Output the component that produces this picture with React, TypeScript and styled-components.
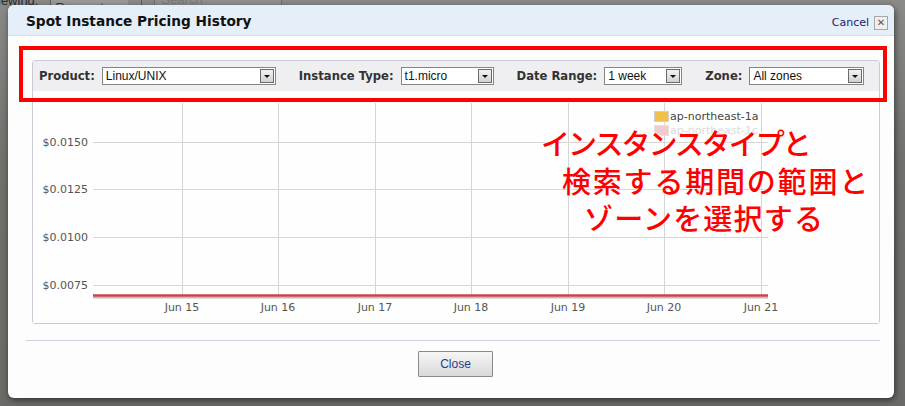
import React from "react";
import styled, {createGlobalStyle} from "styled-components";

type SelectProps = {
    w: number
}
type LineProps = {
    indent: number
    spacing: number
}

const GlobalStyle = createGlobalStyle`
  html, body {
    margin: 0;
    padding: 0;
    background: #777874;
  }
  body {
    font-family: "DejaVu Sans", Verdana, sans-serif;
  }
`

const filters = [
    {label: "Product:", value: "Linux/UNIX", width: 174},
    {label: "Instance Type:", value: "t1.micro", width: 93},
    {label: "Date Range:", value: "1 week", width: 78},
    {label: "Zone:", value: "All zones", width: 115},
]

const priceTicks = [
    {label: "$0.0150", y: 51},
    {label: "$0.0125", y: 98},
    {label: "$0.0100", y: 146},
    {label: "$0.0075", y: 194},
]

const dayTicks = [
    {label: "Jun 15", x: 149},
    {label: "Jun 16", x: 245},
    {label: "Jun 17", x: 342},
    {label: "Jun 18", x: 438},
    {label: "Jun 19", x: 535},
    {label: "Jun 20", x: 631},
    {label: "Jun 21", x: 728},
]

const PriceChart = () => (
    <svg width="846" height="231" viewBox="0 0 846 231">
        {priceTicks.map(t => (
            <g key={t.label}>
                <line x1="60" x2="735" y1={t.y + 0.5} y2={t.y + 0.5} stroke="#d6d6d6" strokeWidth="1"/>
                <text x="55" y={t.y + 4} textAnchor="end" fontSize="11" fill="#555"
                      fontFamily="DejaVu Sans, Verdana, sans-serif">{t.label}</text>
            </g>
        ))}
        {dayTicks.map(t => (
            <g key={t.label}>
                <line x1={t.x + 0.5} x2={t.x + 0.5} y1="12" y2="204" stroke="#d6d6d6" strokeWidth="1"/>
                <text x={t.x} y="220" textAnchor="middle" fontSize="11" fill="#555"
                      fontFamily="DejaVu Sans, Verdana, sans-serif">{t.label}</text>
            </g>
        ))}
        <line x1="60" x2="735" y1="206.5" y2="206.5" stroke="#bdbdbd" strokeWidth="2"/>
        <line x1="60" x2="735" y1="204.5" y2="204.5" stroke="#c9444c" strokeWidth="2.5"/>
        <rect x="621.5" y="20.5" width="14" height="10" fill="#efc04a" stroke="#d0d0d0"/>
        <text x="637" y="29" fontSize="11" fill="#444" fontFamily="DejaVu Sans, Verdana, sans-serif">ap-northeast-1a</text>
        <rect x="621.5" y="34.5" width="14" height="10" fill="#f2cccc" stroke="#e2e2e2"/>
        <text x="637" y="43" fontSize="11" fill="#dcdcdc" fontFamily="DejaVu Sans, Verdana, sans-serif">ap-northeast-1c</text>
    </svg>
)

export default function App() {
    return (
        <Page>
            <GlobalStyle/>
            <BehindBar>
                <BehindLabel>iewing:</BehindLabel>
                <BehindSelect>All Requests<BehindArrow/></BehindSelect>
                <BehindSearch>Search</BehindSearch>
            </BehindBar>
            <Dialog>
                <DialogHeader>
                    <DialogTitle>Spot Instance Pricing History</DialogTitle>
                    <CancelLink>Cancel</CancelLink>
                    <CloseX>✕</CloseX>
                </DialogHeader>
                <DialogBody>
                    <Panel>
                        <FilterBar>
                            {filters.map(f => (
                                <FilterGroup key={f.label}>
                                    <FilterLabel>{f.label}</FilterLabel>
                                    <SelectBox w={f.width}>
                                        <SelectText>{f.value}</SelectText>
                                        <SelectArrow/>
                                    </SelectBox>
                                </FilterGroup>
                            ))}
                        </FilterBar>
                        <ChartArea>
                            <PriceChart/>
                        </ChartArea>
                    </Panel>
                    <Separator/>
                    <Footer>
                        <CloseButton>Close</CloseButton>
                    </Footer>
                </DialogBody>
            </Dialog>
            <RedFrame/>
            <Annotation>
                <AnnotationLine indent={0} spacing={-2}>インスタンスタイプと</AnnotationLine>
                <AnnotationLine indent={21} spacing={1.8}>検索する期間の範囲と</AnnotationLine>
                <AnnotationLine indent={43} spacing={1.2}>ゾーンを選択する</AnnotationLine>
            </Annotation>
        </Page>
    )
}

const Page = styled.div`
  position: relative;
  width: 905px;
  height: 406px;
  overflow: hidden;
  background: linear-gradient(#8a8a88, #70716d 40%, #6a6b67);
`
const BehindBar = styled.div`
  display: flex;
  align-items: center;
  gap: 12px;
  margin-top: -9px;
  height: 18px;
  font-family: "Liberation Sans", Arial, sans-serif;
  font-size: 13px;
  color: #2a2a2a;
`
const BehindLabel = styled.div`
  margin-left: -2px;
`
const BehindSelect = styled.div`
  display: flex;
  align-items: center;
  justify-content: space-between;
  width: 86px;
  height: 16px;
  padding-left: 4px;
  border: 1px solid #5e5e5e;
  background: #9a9a9a;
  color: #3a3a3a;
`
const BehindArrow = styled.div`
  width: 14px;
  height: 14px;
  background: #8a8a8a;
`
const BehindSearch = styled.div`
  width: 120px;
  height: 16px;
  padding-left: 6px;
  border: 1px solid #6e6e6e;
  background: #909090;
  color: #7a7a7a;
`
const Dialog = styled.div`
  position: absolute;
  left: 8px;
  top: 5px;
  width: 886px;
  height: 393px;
  display: flex;
  flex-direction: column;
  background: #fcfdfc;
  border-radius: 6px;
  box-shadow: 1px 2px 6px rgba(0, 0, 0, 0.55);
  overflow: hidden;
`
const DialogHeader = styled.div`
  display: flex;
  align-items: center;
  height: 31px;
  padding: 0 6px 0 18px;
  background: #e5eff9;
  border-bottom: 1px solid #d3dfeb;
  box-sizing: border-box;
`
const DialogTitle = styled.div`
  flex: 1;
  font-size: 13.7px;
  font-weight: 700;
  color: #111;
  padding-top: 1px;
`
const CancelLink = styled.a`
  font-size: 11px;
  color: #1a1a66;
  margin-right: 5px;
  margin-top: 5px;
  cursor: pointer;
`
const CloseX = styled.div`
  display: flex;
  align-items: center;
  justify-content: center;
  width: 12px;
  height: 12px;
  margin-top: 5px;
  border: 1px solid #a8a8a8;
  background: #efefef;
  font-size: 10px;
  font-weight: 700;
  color: #555;
`
const DialogBody = styled.div`
  display: flex;
  flex-direction: column;
  padding: 24px 14px 0 18px;
`
const Panel = styled.div`
  display: flex;
  flex-direction: column;
  margin-left: 6px;
  width: 848px;
  border: 1px solid #cacad4;
  border-radius: 3px;
  box-sizing: border-box;
`
const FilterBar = styled.div`
  display: flex;
  align-items: center;
  gap: 23px;
  height: 30px;
  padding-left: 6px;
  background: #efeff1;
`
const FilterGroup = styled.div`
  display: flex;
  align-items: center;
  gap: 7px;
`
const FilterLabel = styled.div`
  font-size: 11.6px;
  font-weight: 700;
  color: #333;
`
const SelectBox = styled.div<SelectProps>`
  display: flex;
  align-items: center;
  justify-content: space-between;
  width: ${props => props.w}px;
  height: 18px;
  box-sizing: border-box;
  border: 1px solid #858585;
  background: #fff;
`
const SelectText = styled.div`
  padding-left: 3px;
  font-family: "Liberation Sans", Arial, sans-serif;
  font-size: 12px;
  color: #111;
`
const SelectArrow = styled.div`
  position: relative;
  width: 14px;
  height: 14px;
  margin-right: 1px;
  box-sizing: border-box;
  border: 1px solid #6a6a6a;
  background: linear-gradient(#f2f2f2, #d2d2d2);

  &::after {
    content: "";
    position: absolute;
    left: 3px;
    top: 5px;
    border-left: 3px solid transparent;
    border-right: 3px solid transparent;
    border-top: 3px solid #111;
  }
`
const ChartArea = styled.div`
  display: flex;
  height: 232px;
  background: #fdfefd;
`
const Separator = styled.div`
  height: 1px;
  margin-top: 16px;
  background: #cfcfdf;
  width: 854px;
`
const Footer = styled.div`
  display: flex;
  justify-content: center;
  padding-top: 10px;
  padding-left: 5px;
`
const CloseButton = styled.button`
  width: 75px;
  height: 26px;
  border: 1px solid #8a8a8a;
  border-radius: 1px;
  background: linear-gradient(#f6f6f6, #d9d9d9);
  font-family: "Liberation Sans", Arial, sans-serif;
  font-size: 12px;
  color: #1d3f91;
  padding: 0;
`
const RedFrame = styled.div`
  position: absolute;
  left: 19px;
  top: 46px;
  width: 868px;
  height: 56px;
  box-sizing: border-box;
  border: 4px solid #ff0000;
`
const Annotation = styled.div`
  position: absolute;
  left: 541px;
  top: 124px;
  display: flex;
  flex-direction: column;
  font-family: "Noto Sans CJK JP", sans-serif;
  font-size: 29px;
  font-weight: 500;
  line-height: 37.5px;
  color: #ff0000;
  text-shadow: 0 0 2px #fff, 0 0 2px #fff;
`
const AnnotationLine = styled.div<LineProps>`
  padding-left: ${props => props.indent}px;
  letter-spacing: ${props => props.spacing}px;
  white-space: nowrap;
`
